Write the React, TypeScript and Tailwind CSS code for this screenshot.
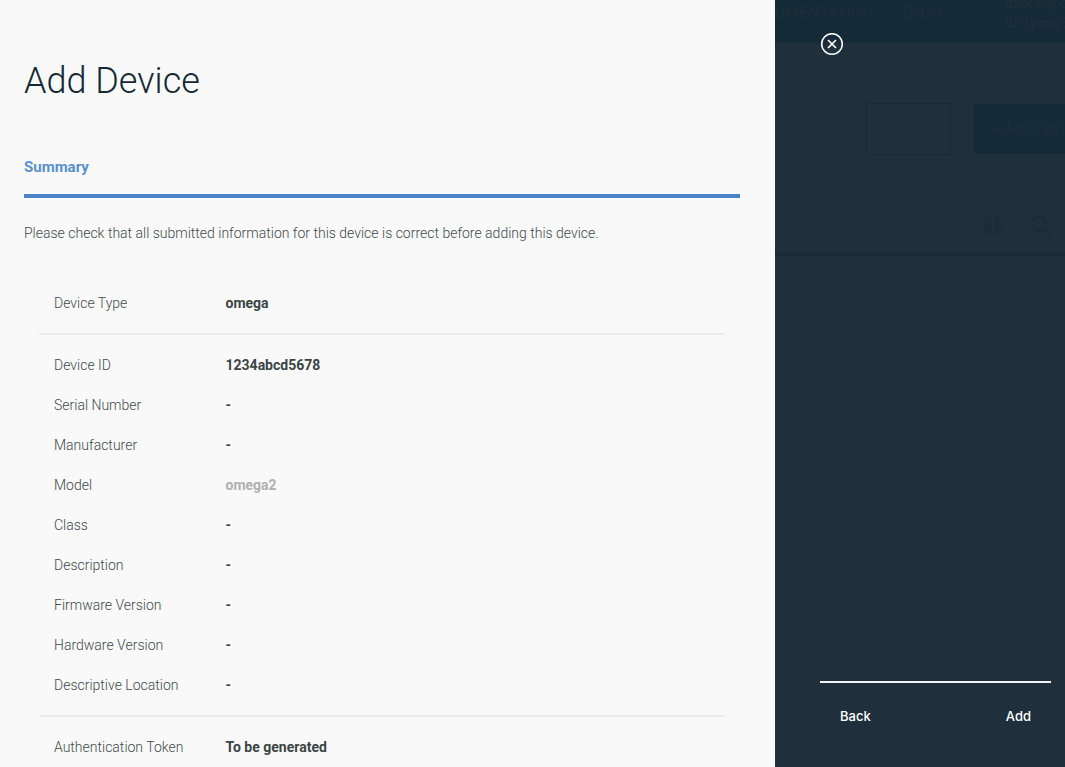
type Field = { label: string; value: string; muted?: boolean };

const sections: Field[][] = [
  [{ label: "Device Type", value: "omega" }],
  [
    { label: "Device ID", value: "1234abcd5678" },
    { label: "Serial Number", value: "-" },
    { label: "Manufacturer", value: "-" },
    { label: "Model", value: "omega2", muted: true },
    { label: "Class", value: "-" },
    { label: "Description", value: "-" },
    { label: "Firmware Version", value: "-" },
    { label: "Hardware Version", value: "-" },
    { label: "Descriptive Location", value: "-" },
  ],
  [{ label: "Authentication Token", value: "To be generated" }],
];

function Summary() {
  return (
    <div className="mx-[15px] divide-y-2 divide-[#ececec]">
      {sections.map((fields) => (
        <dl key={fields[0].label} className="py-[10px] last:pb-0">
          {fields.map((field) => (
            <div key={field.label} className="flex h-10 items-center text-sm">
              <dt className="w-1/4 px-[15px] font-light whitespace-nowrap text-[#414b4b]">{field.label}</dt>
              <dd
                className={
                  field.muted
                    ? "flex-1 px-[15px] font-bold text-[#b0b0b0]"
                    : "flex-1 px-[15px] font-bold text-[#3a4545]"
                }
              >
                {field.value}
              </dd>
            </div>
          ))}
        </dl>
      ))}
    </div>
  );
}

/* The device page, seen dimmed behind the dialog. */
function Backdrop() {
  return (
    <div aria-hidden="true" className="absolute inset-0 overflow-hidden font-light whitespace-nowrap">
      <div className="flex h-[43px] bg-[#152a37] text-base leading-5 text-[#1f303c]">
        <div className="flex w-[98px] shrink-0 justify-end overflow-hidden pt-[3px]">
          <span>DOCUMENTATION</span>
        </div>
        <span className="w-[132px] shrink-0 pt-[3px] pl-[30px]">BLOG</span>
        <div className="-mt-[7px] text-sm leading-5 font-normal">
          <div>gabriel@c</div>
          <div>ID: (ymbj8</div>
        </div>
      </div>
      <div className="flex h-[213px] flex-col justify-between border-b-4 border-[#1b2b37] pt-[60px] pb-[15px]">
        <div className="flex items-center gap-[23px] pl-[91px] text-base text-[#1b2b37]">
          <div className="flex h-[52px] w-[85px] shrink-0 items-center justify-center border border-[#182a36]">
            Refresh
          </div>
          <div className="flex h-[50px] w-[130px] shrink-0 items-center bg-[#152a37] pl-4 text-[#1f303c]">
            + Add Device
          </div>
        </div>
        <div className="flex items-center gap-5 pl-[210px]">
          <svg width="25" height="18" viewBox="0 0 25 18" fill="#1c2c38">
            <rect width="7" height="18" />
            <rect x="9" width="7" height="18" />
            <rect x="18.5" y="0.5" width="5" height="17" fill="none" stroke="#1c2c38" />
          </svg>
          <svg width="22" height="22" viewBox="0 0 22 22" fill="none" stroke="#1b2b37">
            <circle cx="8.500" cy="8.500" r="7" strokeWidth="2" />
            <path d="M15 15l5.500 5.500" strokeWidth="4" />
          </svg>
        </div>
      </div>
    </div>
  );
}

export default function App() {
  return (
    <div className="flex min-h-screen bg-[#1f303c] font-[Roboto,'Liberation_Sans',sans-serif]">
      <main className="min-w-0 flex-1 bg-[#f9f9f9] pr-[35px] pl-6">
        <h1 className="pt-[58px] text-[36px] leading-[46px] font-light text-[#152935]">Add Device</h1>
        <h2 className="mt-[51px] border-b-4 border-[#4a84c8] pb-[14px] text-[15px] leading-[25px] font-bold text-[#5a90d0]">
          Summary
        </h2>
        <p className="mt-[25px] mb-[30px] text-sm leading-5 font-light text-[#414b4b]">
          Please check that all submitted information for this device is correct before adding this device.
        </p>
        <Summary />
      </main>

      <aside className="relative flex w-[290px] shrink-0 flex-col">
        <Backdrop />
        <div className="relative flex flex-1 flex-col items-start justify-between pt-8 pr-[14px] pl-[45px]">
          <button type="button" aria-label="Close" className="text-white">
            <svg width="24" height="24" viewBox="0 0 24 24" fill="none" stroke="currentColor">
              <circle cx="12" cy="12" r="10.300" strokeWidth="1.500" />
              <path d="M8 8l8 8M16 8l-8 8" strokeWidth="1.700" />
            </svg>
          </button>
          <div className="flex h-[86px] w-full items-start justify-between border-t-2 border-[#f4f4f4] px-5 pt-[23px] font-[Inter,'Liberation_Sans',sans-serif] text-[13px] leading-5 font-medium text-white">
            <button type="button">Back</button>
            <button type="button">Add</button>
          </div>
        </div>
      </aside>
    </div>
  );
}
